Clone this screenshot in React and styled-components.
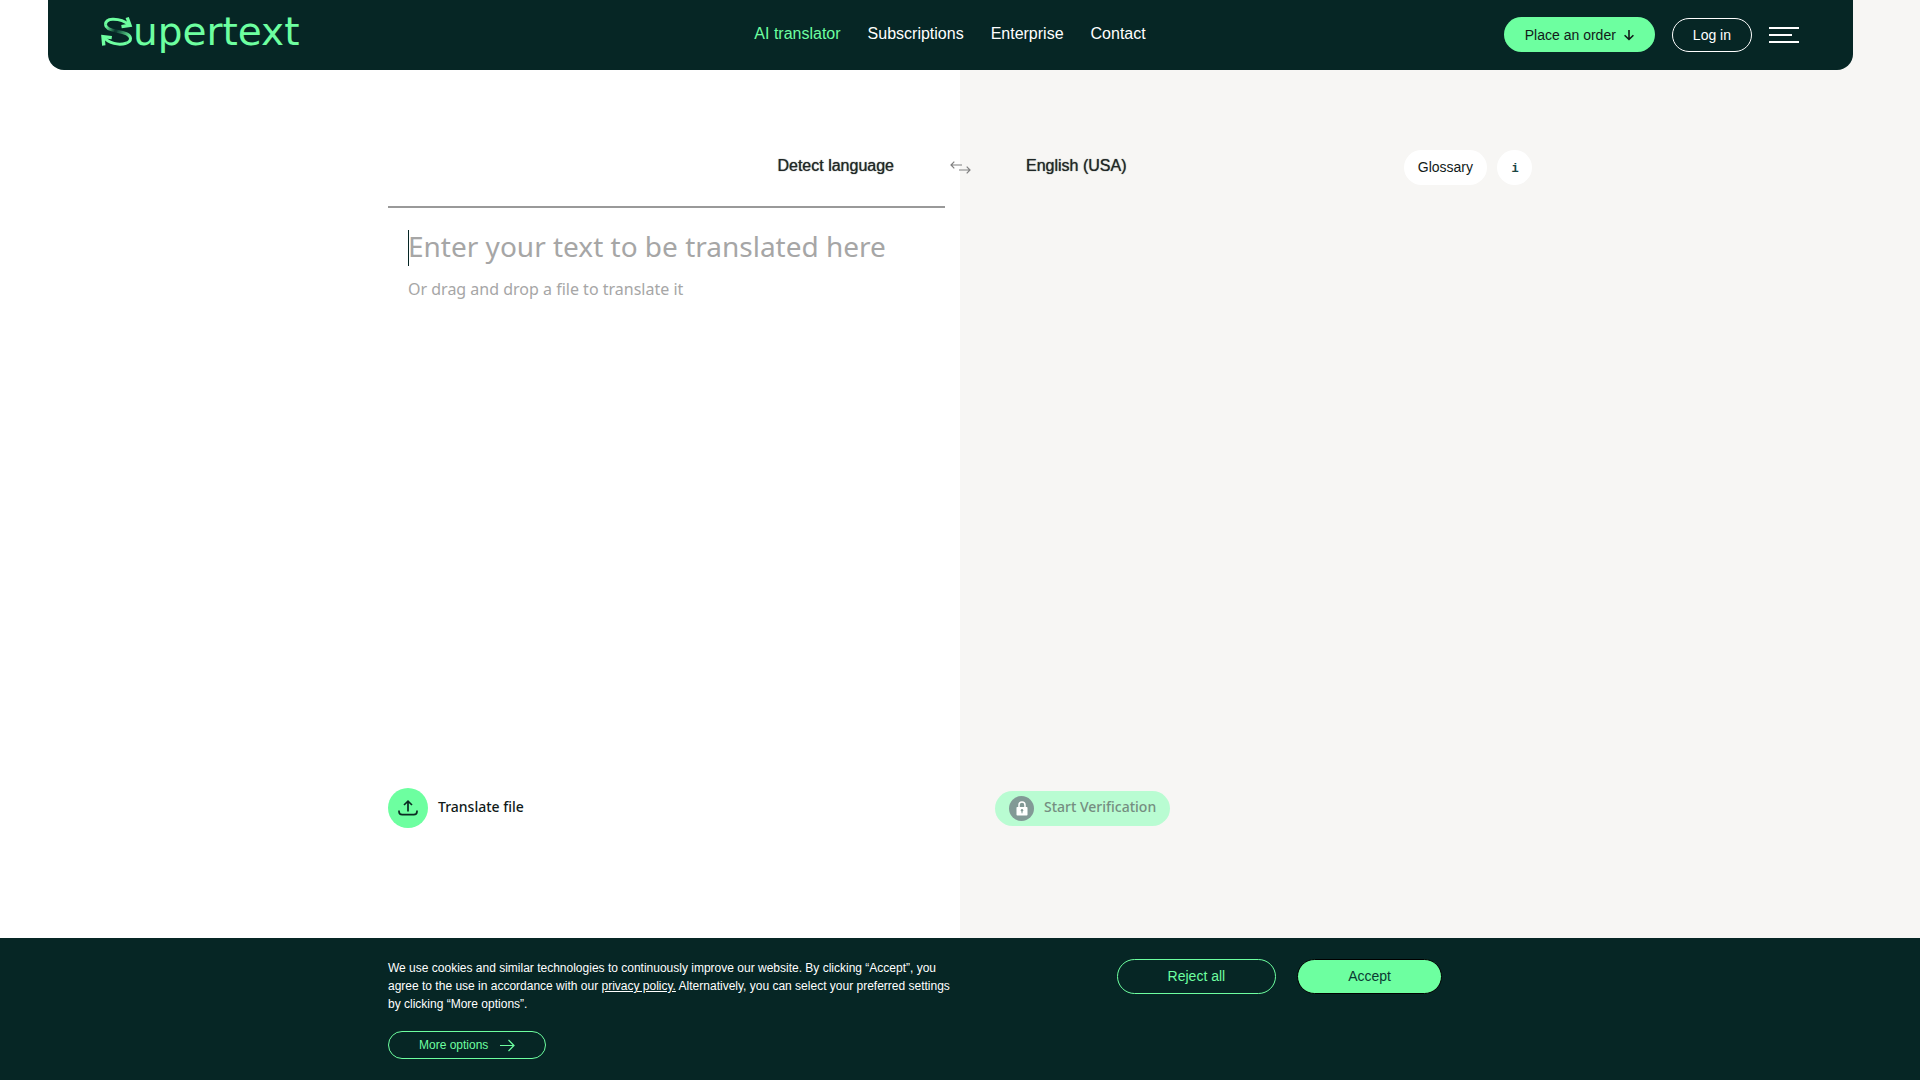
import React, { useState } from 'react';
import styled, { createGlobalStyle } from 'styled-components';

const GlobalStyle = createGlobalStyle`
    * {
        box-sizing: border-box;
    }

    body {
        margin: 0;
        font-family: 'Liberation Sans', Arial, sans-serif;
        color: #111a19;
    }

    button,
    textarea {
        font-family: inherit;
        margin: 0;
    }

    button {
        cursor: pointer;
    }
`;

const Page = styled.div`
    display: flex;
    flex-direction: column;
    min-height: 100vh;
    background: linear-gradient(90deg, #ffffff 50%, #f7f6f4 50%);
`;

const Header = styled.header`
    display: grid;
    grid-template-columns: 1fr auto 1fr;
    align-items: center;
    height: 70px;
    margin: 0 67px 0 48px;
    padding: 0 54px 0 53px;
    border-radius: 0 0 16px 16px;
    background: #062625;
`;

const Logo = styled.a`
    display: flex;
    align-items: center;
    justify-self: start;
    padding-bottom: 6px;
    color: #6dffa0;
    font-family: 'DejaVu Sans', sans-serif;
    font-size: 39px;
    line-height: 64px;
    text-decoration: none;
`;

const Nav = styled.nav`
    display: flex;
    gap: 27px;
    padding-bottom: 2px;
`;

const NavLink = styled.a`
    color: ${({ $active }) => ($active ? '#6dffa0' : '#ffffff')};
    font-size: 16px;
    line-height: 20px;
    text-decoration: none;
`;

const HeaderActions = styled.div`
    display: flex;
    align-items: flex-end;
    justify-self: end;
    gap: 17px;
    padding-bottom: 1px;
`;

const Pill = styled.button`
    display: inline-flex;
    align-items: center;
    justify-content: center;
    gap: ${({ $gap }) => $gap || 8}px;
    height: ${({ $height }) => $height || 35}px;
    padding: 0 ${({ $pad }) => $pad || 20}px ${({ $lift }) => ($lift ? 2 : 0)}px;
    border: 1px solid ${({ $border }) => $border || 'transparent'};
    border-radius: 18px;
    background: ${({ $bg }) => $bg || 'transparent'};
    color: ${({ $color }) => $color || '#111a19'};
    font-size: ${({ $size }) => $size || 14}px;
`;

const Burger = styled.button`
    display: flex;
    flex-direction: column;
    align-self: center;
    gap: 5px;
    padding: 1px 0 0;
    border: 0;
    background: none;
`;

const Bar = styled.span`
    width: ${({ $short }) => ($short ? 23 : 30)}px;
    height: 2px;
    background: #ffffff;
`;

const Translator = styled.main`
    display: grid;
    grid-template-columns: 1fr 40px 1fr;
    grid-template-rows: auto 1fr auto;
    flex: 1;
    width: 100%;
    max-width: 1144px;
    margin: 0 auto;
    padding: 66px 0 110px;
`;

const LanguageBar = styled.div`
    display: flex;
    align-items: center;
    justify-content: ${({ $right }) => ($right ? 'flex-end' : 'space-between')};
    height: 70px;
    padding: ${({ $right }) => ($right ? '0 46px 7px 0' : '0 0 7px 46px')};
`;

const LanguageButton = styled.button`
    padding: 0 0 3px;
    border: 0;
    background: none;
    color: #1f2726;
    font-size: 16px;
    line-height: 20px;
    text-shadow: 0 0 1px rgba(17, 26, 25, 0.8);
`;

const SwapButton = styled.button`
    display: flex;
    align-items: center;
    justify-content: center;
    height: 62px;
    padding: 0;
    border: 0;
    background: none;
    color: #808080;
`;

const Tools = styled.div`
    display: flex;
    gap: 10px;
`;

const InfoButton = styled.button`
    width: 35px;
    height: 35px;
    padding: 3px 0 0 1px;
    border: 0;
    border-radius: 50%;
    background: #ffffff;
    color: #1b4643;
    font-family: 'Liberation Mono', monospace;
    font-size: 12px;
    font-weight: bold;
`;

const Editor = styled.div`
    grid-column: 1;
    margin-right: -5px;
    padding: 22px 20px;
    border-top: 2px solid #999999;
`;

const SourceText = styled.textarea`
    display: block;
    width: 100%;
    height: 36px;
    padding: 0;
    border: 0;
    outline: none;
    resize: none;
    overflow: hidden;
    background: none;
    box-shadow: inset 1px 0 #062625;
    color: #062625;
    caret-color: transparent;
    font-family: 'Noto Sans', sans-serif;
    font-size: 28px;
    line-height: 32px;

    &::placeholder {
        color: #a6a6a6;
        opacity: 1;
    }
`;

const DropHint = styled.p`
    margin: 12px 0 0;
    color: #a6a6a6;
    font-family: 'Noto Sans', sans-serif;
    font-size: 16px;
    line-height: 22px;
`;

const Footer = styled.div`
    display: flex;
    align-items: center;
    grid-column: ${({ $column }) => $column};
    grid-row: 3;
    padding-left: ${({ $column }) => ($column === 3 ? 15 : 0)}px;
`;

const UploadButton = styled.button`
    display: flex;
    align-items: center;
    gap: 10px;
    padding: 0;
    border: 0;
    background: none;
    color: #111a19;
    font-family: 'Noto Sans', sans-serif;
    font-size: 14px;
    font-weight: 500;
    line-height: 20px;
`;

const UploadCircle = styled.span`
    display: flex;
    align-items: center;
    justify-content: center;
    width: 40px;
    height: 40px;
    border-radius: 50%;
    background: #6dffa0;
`;

const VerifyButton = styled.button`
    display: flex;
    align-items: center;
    gap: 10px;
    height: 35px;
    padding: 0 14px;
    border: 0;
    border-radius: 18px;
    background: #b9fcd2;
    color: #758e81;
    font-family: 'Noto Sans', sans-serif;
    font-size: 14px;
    font-weight: 500;
    line-height: 20px;
`;

const LockCircle = styled.span`
    display: flex;
    align-items: center;
    justify-content: center;
    width: 25px;
    height: 25px;
    border-radius: 50%;
    background: #829996;
`;

const ButtonLabel = styled.span`
    padding-bottom: 2px;
`;

const CookieBar = styled.section`
    background: #062625;
    color: #ffffff;
`;

const CookieInner = styled.div`
    display: flex;
    justify-content: space-between;
    align-items: flex-start;
    max-width: 1144px;
    margin: 0 auto;
    padding: 21px 0;
`;

const CookieInfo = styled.div`
    max-width: 574px;
`;

const CookieText = styled.p`
    margin: 0 0 18px;
    font-size: 12px;
    line-height: 18px;
`;

const PolicyLink = styled.a`
    color: #ffffff;
`;

const CookieActions = styled.div`
    display: flex;
    gap: 21px;
    padding-right: 90px;
`;

const LogoMark = () => (
    <svg width="32" height="32" viewBox="0 0 32 32" fill="none" stroke="#6dffa0" strokeWidth="3" aria-hidden="true">
        <defs>
            <linearGradient id="top" x1="5" y1="10" x2="18" y2="16" gradientUnits="userSpaceOnUse">
                <stop offset="0" stopColor="#6dffa0" />
                <stop offset="0.7" stopColor="#0d3a31" />
                <stop offset="1" stopColor="#12463a" />
            </linearGradient>
            <linearGradient id="bottom" x1="16" y1="15" x2="29" y2="23" gradientUnits="userSpaceOnUse">
                <stop offset="0" stopColor="#12463a" />
                <stop offset="1" stopColor="#6dffa0" />
            </linearGradient>
        </defs>
        <path d="M16 15.200C23 16.500 29.500 18 29.500 22.600C29.500 25 27.500 26.500 25 27.300" stroke="url(#bottom)" />
        <path d="M4.500 8.500C4.500 12.500 9 14 16 15.200" stroke="url(#top)" />
        <path d="M28.500 9C23 4.500 16.500 3 11.500 3.200C7 3.400 4.500 5.500 4.500 8.700" />
        <path d="M25.200 27.200C17.500 29.500 8 27.500 2.500 21" />
        <path d="M26.200 1.500L29 9.300L20.500 10.600" strokeWidth="3.400" />
        <path d="M2.800 29.500L2 20.600L10.800 21.600" strokeWidth="3.400" />
    </svg>
);

const ArrowDown = () => (
    <svg width="10" height="12" viewBox="0 0 10 12" fill="none" stroke="currentColor" strokeWidth="1.600" aria-hidden="true">
        <path d="M5 1V10.500M0.600 6.200L5 10.500L9.400 6.200" />
    </svg>
);

const SwapIcon = () => (
    <svg width="21" height="13" viewBox="0 0 21 13" fill="none" stroke="currentColor" strokeWidth="1.200" aria-hidden="true">
        <path d="M12 4H1M4.300 0.700L1 4L4.300 7.300M9 9H20M16.700 5.700L20 9L16.700 12.300" />
    </svg>
);

const UploadIcon = () => (
    <svg width="20" height="16" viewBox="0 0 20 16" fill="none" stroke="#0b2b22" strokeWidth="1.700" aria-hidden="true">
        <path d="M10 11.500V1.500M6 5L10 1.200L14 5" />
        <path d="M1 10.500V11.500Q1 14.600 4.200 14.600H15.800Q19 14.600 19 11.500V10.500" />
    </svg>
);

const LockIcon = () => (
    <svg width="12" height="15" viewBox="0 0 12 15" fill="none" aria-hidden="true">
        <path d="M3 7V4Q3 1 6 1T9 4V7" stroke="#ffffff" strokeWidth="1.500" />
        <rect x="0.500" y="6" width="11" height="8.500" rx="0.800" fill="#ffffff" />
        <circle cx="6" cy="9.300" r="1.200" fill="#829996" />
        <path d="M6 9.500V12.300" stroke="#829996" />
    </svg>
);

const ArrowRight = () => (
    <svg width="15" height="13" viewBox="0 0 15 13" fill="none" stroke="currentColor" strokeWidth="1.200" aria-hidden="true">
        <path d="M0 6.500H14M8.500 1L14 6.500L8.500 12" />
    </svg>
);

const navItems = ['AI translator', 'Subscriptions', 'Enterprise', 'Contact'];

const App = () => {
    const [text, setText] = useState('');

    return (
        <Page>
            <GlobalStyle />
            <Header>
                <Logo href="#" aria-label="Supertext">
                    <LogoMark />
                    <span>upertext</span>
                </Logo>
                <Nav>
                    {navItems.map((item, index) => (
                        <NavLink key={item} href="#" $active={index === 0}>{item}</NavLink>
                    ))}
                </Nav>
                <HeaderActions>
                    <Pill $bg="#6dffa0">Place an order <ArrowDown /></Pill>
                    <Pill $border="#ffffff" $color="#ffffff" $height={34}>Log in</Pill>
                    <Burger aria-label="Menu">
                        <Bar />
                        <Bar $short />
                        <Bar />
                    </Burger>
                </HeaderActions>
            </Header>

            <Translator>
                <LanguageBar $right>
                    <LanguageButton>Detect language</LanguageButton>
                </LanguageBar>
                <SwapButton aria-label="Swap languages"><SwapIcon /></SwapButton>
                <LanguageBar>
                    <LanguageButton>English (USA)</LanguageButton>
                    <Tools>
                        <Pill $bg="#ffffff" $pad={13} $lift>Glossary</Pill>
                        <InfoButton aria-label="Information">i</InfoButton>
                    </Tools>
                </LanguageBar>

                <Editor>
                    <SourceText
                        aria-label="Source text"
                        placeholder="Enter your text to be translated here"
                        value={text}
                        onChange={(e) => setText(e.target.value)}
                    />
                    <DropHint>Or drag and drop a file to translate it</DropHint>
                </Editor>

                <Footer $column={1}>
                    <UploadButton>
                        <UploadCircle><UploadIcon /></UploadCircle>
                        <ButtonLabel>Translate file</ButtonLabel>
                    </UploadButton>
                </Footer>
                <Footer $column={3}>
                    <VerifyButton disabled>
                        <LockCircle><LockIcon /></LockCircle>
                        <ButtonLabel>Start Verification</ButtonLabel>
                    </VerifyButton>
                </Footer>
            </Translator>

            <CookieBar>
                <CookieInner>
                    <CookieInfo>
                        <CookieText>
                            We use cookies and similar technologies to continuously improve our website. By clicking “Accept”, you
                            agree to the use in accordance with our <PolicyLink href="#">privacy policy.</PolicyLink> Alternatively,
                            you can select your preferred settings by clicking “More options”.
                        </CookieText>
                        <Pill $border="#6dffa0" $color="#6dffa0" $height={28} $pad={30} $gap={12} $size={12}>
                            More options <ArrowRight />
                        </Pill>
                    </CookieInfo>
                    <CookieActions>
                        <Pill $border="#6dffa0" $color="#6dffa0" $pad={50} $lift>Reject all</Pill>
                        <Pill $border="#000000" $bg="#6dffa0" $color="#0b3a33" $pad={50} $lift>Accept</Pill>
                    </CookieActions>
                </CookieInner>
            </CookieBar>
        </Page>
    );
};

export default App;
